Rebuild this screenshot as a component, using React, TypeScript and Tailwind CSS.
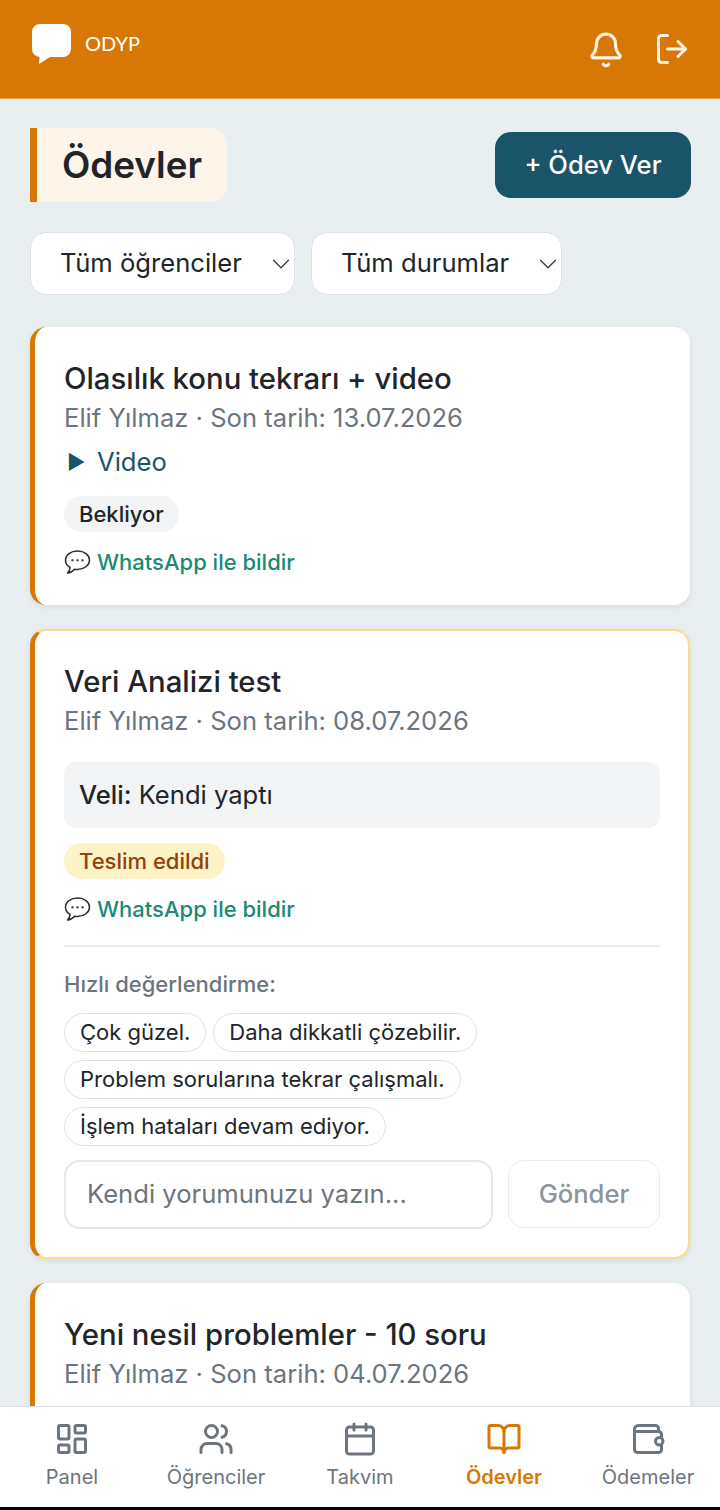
import React from 'react';
import { Bell, LogOut, LayoutDashboard, Users, Calendar, BookOpen, ChevronDown } from 'lucide-react';

const BalloonIcon = () => (
  <svg width="27" height="26" viewBox="0 0 27 26" className="shrink-0">
    <path
      d="M13.5 2C6.8 2 1.5 6 1.5 11.2c0 3 1.8 5.6 4.6 7.3-.1 2-1.2 4-2.6 5.5 2.8-.3 5.3-1.6 7-3.8 1 .2 2 .2 3 .2 6.700 0 12-4 12-9.200S20.200 2 13.500 2Z"
      fill="#fff"
      stroke="#2b2f33"
      strokeWidth="1.5"
      strokeLinejoin="round"
    />
    <circle cx="8.500" cy="11.200" r="1.200" fill="#555" />
    <circle cx="13.500" cy="11.200" r="1.200" fill="#555" />
    <circle cx="18.500" cy="11.200" r="1.200" fill="#555" />
  </svg>
);

const WalletIcon = ({ size }: { size: number }) => (
  <svg width={size} height={size} viewBox="0 0 24 24" fill="none" stroke="currentColor" strokeWidth="2" strokeLinecap="round" strokeLinejoin="round">
    <path d="M19 7V5a2 2 0 0 0-2-2H5.500A2.500 2.500 0 0 0 3 5.500V19a2 2 0 0 0 2 2h14a2 2 0 0 0 2-2v-3" />
    <path d="M3.500 7H19a2 2 0 0 1 2 2v2" />
    <rect x="17" y="11" width="5" height="5" rx="2.500" />
  </svg>
);

const WhatsApp = () => (
  <div className="flex items-center gap-[6px] h-[32px]">
    <BalloonIcon />
    <span className="text-[22px] font-[450] text-[#1a8a75]">WhatsApp ile bildir</span>
  </div>
);

const Title = ({ children }: { children: React.ReactNode }) => (
  <div className="text-[29.300px] leading-[40px] font-[450] text-[#212529]">{children}</div>
);

const Sub = ({ children }: { children: React.ReactNode }) => (
  <div className="text-[25.600px] leading-[38px] text-[#6c757d]">{children}</div>
);

const Filter = ({ label, width }: { label: string; width: string }) => (
  <div className={`${width} h-[63px] bg-white border border-[#dee2e6] rounded-2xl flex items-center justify-between pl-[29px] pr-0`}>
    <span className="text-[25.600px] text-[#212529]">{label}</span>
    <ChevronDown size={30} strokeWidth={1} color="#343a40" className="-mr-[2px]" />
  </div>
);

const quick = ['Çok güzel.', 'Daha dikkatli çözebilir.', 'Problem sorularına tekrar çalışmalı.', 'İşlem hataları devam ediyor.'];

const navItems = [
  { label: 'Panel', icon: <LayoutDashboard size={36} strokeWidth={2} /> },
  { label: 'Öğrenciler', icon: <Users size={36} strokeWidth={2} /> },
  { label: 'Takvim', icon: <Calendar size={36} strokeWidth={2} /> },
  { label: 'Ödevler', icon: <BookOpen size={36} strokeWidth={2} />, active: true },
  { label: 'Ödemeler', icon: <WalletIcon size={36} /> },
];

export default function App() {
  return (
    <div className="w-[720px] h-[1510px] flex flex-col overflow-hidden bg-[#e9eef1] font-['Inter',sans-serif]">
      {/* header */}
      <header className="h-[99px] shrink-0 bg-[#d97706] border-b border-[#e8a54e] flex justify-between pl-[32px] pr-[30px]">
        <div className="flex items-start gap-[14px] pt-[24px]">
          <svg width="39" height="40" viewBox="0 0 39 40">
            <path d="M8 0h23a8 8 0 0 1 8 8v17a8 8 0 0 1-8 8H18l-11 7 .5-7A8 8 0 0 1 0 25V8a8 8 0 0 1 8-8Z" fill="#fff" />
          </svg>
          <span className="text-[20px] leading-[39px] text-white font-normal font-['Lato',sans-serif]">ODYP</span>
        </div>
        <div className="flex items-start gap-[29px] pt-[31px] text-[#fdf3e3]">
          <Bell size={38} strokeWidth={2} />
          <LogOut size={36} strokeWidth={2} />
        </div>
      </header>

      <main className="flex-1 min-h-0 overflow-hidden px-[30px] pt-[29px]">
        <div className="flex justify-between items-center">
          <div className="h-[74px] bg-[#fdf4ea] border-l-[7px] border-[#d97706] rounded-r-2xl pl-[25px] pr-[25px] flex items-center">
            <h1 className="text-[36.800px] font-semibold text-[#212529] -mt-[1px]">Ödevler</h1>
          </div>
          <button className="w-[196px] h-[66px] mr-[-1px] bg-[#1a5469] text-white text-[25.600px] font-medium rounded-2xl">+ Ödev Ver</button>
        </div>

        <div className="flex gap-[16px] mt-[30px]">
          <Filter label="Tüm öğrenciler" width="w-[265px]" />
          <Filter label="Tüm durumlar" width="w-[251px]" />
        </div>

        {/* card 1 */}
        <section className="mt-[32px] h-[278px] bg-white border-l-[5px] border-[#d97706] rounded-2xl shadow-[0_2px_6px_rgba(0,0,0,0.08)] pl-[29px] pr-[30px] pt-[32px]">
          <Title>Olasılık konu tekrarı + video</Title>
          <Sub>Elif Yılmaz · Son tarih: 13.07.2026</Sub>
          <div className="flex items-center h-[38px] text-[25.600px] text-[#1a5469] mt-[6px]">
            <span className="w-[33px] pl-[3px] text-[20px]">►</span>
            <span>Video</span>
          </div>
          <span className="inline-block mt-[15px] h-[36px] leading-[36px] px-[15px] rounded-full bg-[#f3f4f6] text-[22px] font-[450] text-[#212529]">Bekliyor</span>
          <div className="mt-[14px]"><WhatsApp /></div>
        </section>

        {/* card 2 */}
        <section className="mt-[24px] h-[630px] bg-white border-2 border-l-[5px] border-[#f5dc8f] border-l-[#d97706] rounded-2xl shadow-[0_2px_6px_rgba(0,0,0,0.08)] pl-[29px] pr-[28px] pt-[31px]">
          <Title>Veri Analizi test</Title>
          <Sub>Elif Yılmaz · Son tarih: 08.07.2026</Sub>
          <div className="mt-[22px] h-[66px] rounded-xl bg-[#f3f4f6] flex items-center px-[15px] text-[25.600px] text-[#212529]">
            <span className="font-medium">Veli:</span>&nbsp;Kendi yaptı
          </div>
          <span className="inline-block mt-[15px] h-[36px] leading-[36px] px-[15px] rounded-full bg-[#fef3c7] text-[22px] font-[450] text-[#92400e]">Teslim edildi</span>
          <div className="mt-[14px]"><WhatsApp /></div>
          <div className="mt-[20px] border-t-2 border-[#e9ecef] pt-[22px]">
            <div className="text-[22px] leading-[30px] font-[450] text-[#6c757d]">Hızlı değerlendirme:</div>
            <div className="flex flex-wrap gap-x-[7px] gap-y-[8px] mt-[14px]">
              {quick.map((q) => (
                <span key={q} className="h-[39px] leading-[37px] px-[15px] rounded-full border border-[#dee2e6] bg-white text-[22px] text-[#212529]">{q}</span>
              ))}
            </div>
            <div className="flex gap-[15px] mt-[14px]">
              <div className="w-[429px] h-[69px] border-2 border-[#e5e7ea] rounded-2xl flex items-center pl-[21px] text-[25.600px] text-[#6c757d]">Kendi yorumunuzu yazın...</div>
              <button className="w-[152px] h-[68px] border border-[#e9ecef] rounded-2xl bg-white text-[25.600px] font-medium text-[#8d949b]">Gönder</button>
            </div>
          </div>
        </section>

        {/* card 3 */}
        <section className="mt-[24px] h-[400px] bg-white border-l-[5px] border-[#d97706] rounded-2xl shadow-[0_2px_6px_rgba(0,0,0,0.08)] pl-[29px] pr-[30px] pt-[32px]">
          <Title>Yeni nesil problemler - 10 soru</Title>
          <Sub>Elif Yılmaz · Son tarih: 04.07.2026</Sub>
        </section>
      </main>

      {/* bottom nav */}
      <nav className="h-[101px] shrink-0 bg-white border-t border-[#dee2e6] flex pt-[14px]">
        {navItems.map(({ label, icon, active }) => (
          <div key={label} className={`w-[144px] flex flex-col items-center ${active ? 'text-[#d97706]' : 'text-[#6c757d]'}`}>
            {icon}
            <span className={`mt-[5px] text-[20px] leading-[30px] ${active ? 'font-semibold' : 'font-normal'}`}>{label}</span>
          </div>
        ))}
      </nav>
      <div className="h-[3px] shrink-0 bg-black" />
    </div>
  );
}
